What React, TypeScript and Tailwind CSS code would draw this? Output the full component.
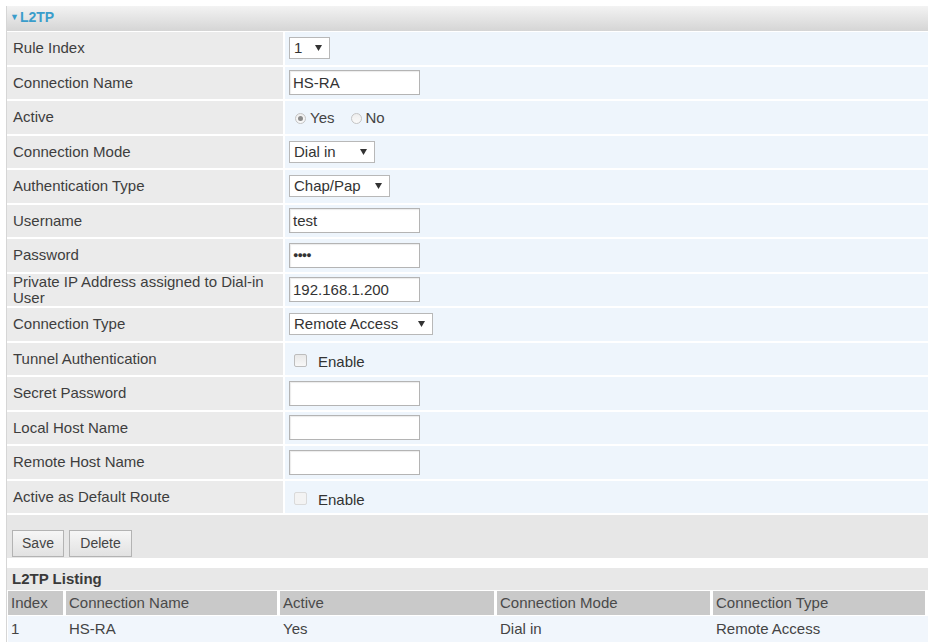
import React from "react";

type Row = { label: React.ReactNode; value: React.ReactNode };

const TextBox = ({ value, dots }: { value?: string; dots?: boolean }) => (
  <div className="w-[131px] h-[25px] bg-white border border-[#b4b4b4] shadow-[inset_1px_1px_1px_rgba(0,0,0,0.08)] flex items-center pl-[3px] text-[#333]">
    {dots ? <span className="text-[9px] tracking-[-1px] leading-none">●●●●</span> : value}
  </div>
);

const Select = ({ value, width }: { value: string; width: string }) => (
  <div
    className={`${width} h-[22px] bg-white border border-[#b8b8b8] flex items-center justify-between pl-[4px] pr-[7px] text-[#333]`}
  >
    <span>{value}</span>
    <svg width="7" height="6" viewBox="0 0 7 6">
      <path d="M0 0h7L3.5 6z" fill="#333" />
    </svg>
  </div>
);

const Radio = ({ checked }: { checked?: boolean }) => (
  <span className="inline-flex w-[11px] h-[11px] rounded-full border border-[#c4c4c4] bg-gradient-to-b from-[#eeeeee] to-[#fafafa] items-center justify-center">
    {checked && <span className="w-[5px] h-[5px] rounded-full bg-[#8a8a8a]" />}
  </span>
);

const Checkbox = ({ faded }: { faded?: boolean }) => (
  <span
    className={`inline-block w-[13px] h-[13px] rounded-[2px] border ${
      faded ? "border-[#dadada] bg-[#f3f3f3]" : "border-[#bdbdbd] bg-gradient-to-b from-[#e8e8e8] to-[#f8f8f8]"
    }`}
  />
);

export default function App() {
  const rows: Row[] = [
    { label: "Rule Index", value: <Select value="1" width="w-[41px]" /> },
    { label: "Connection Name", value: <TextBox value="HS-RA" /> },
    {
      label: "Active",
      value: (
        <div className="flex items-center pl-[6px] pt-[2px] text-[#444]">
          <Radio checked />
          <span className="ml-[4px]">Yes</span>
          <span className="ml-[17px] flex">
            <Radio />
          </span>
          <span className="ml-[3px]">No</span>
        </div>
      ),
    },
    { label: "Connection Mode", value: <Select value="Dial in" width="w-[86px]" /> },
    { label: "Authentication Type", value: <Select value="Chap/Pap" width="w-[101px]" /> },
    { label: "Username", value: <TextBox value="test" /> },
    { label: "Password", value: <TextBox dots /> },
    {
      label: (
        <span className="leading-[16px] block">
          Private IP Address assigned to Dial-in
          <br />
          User
        </span>
      ),
      value: <TextBox value="192.168.1.200" />,
    },
    { label: "Connection Type", value: <Select value="Remote Access" width="w-[144px]" /> },
    {
      label: "Tunnel Authentication",
      value: (
        <div className="flex items-center pl-[5px] pt-[3px] text-[#333]">
          <Checkbox />
          <span className="ml-[11px] pt-[3px]">Enable</span>
        </div>
      ),
    },
    { label: "Secret Password", value: <TextBox /> },
    { label: "Local Host Name", value: <TextBox /> },
    { label: "Remote Host Name", value: <TextBox /> },
    {
      label: "Active as Default Route",
      value: (
        <div className="flex items-center pl-[5px] pt-[3px] text-[#333]">
          <Checkbox faded />
          <span className="ml-[11px] pt-[3px]">Enable</span>
        </div>
      ),
    },
  ];

  const cols = ["Index", "Connection Name", "Active", "Connection Mode", "Connection Type"];
  const data = ["1", "HS-RA", "Yes", "Dial in", "Remote Access"];

  return (
    <div className="w-[931px] h-[642px] bg-white overflow-hidden font-['Liberation_Sans',Arial,sans-serif] text-[15px] text-[#3e3e3e]">
      <div className="ml-[6px] mr-[3px] mt-[6px] border-l border-[#d6d6d6] h-[636px]">
        {/* Section title */}
        <div className="h-[25px] bg-gradient-to-b from-[#f3f3f3] to-[#d5d5d5] flex items-center pl-[3px] pb-[2px] text-[#3a9dcb] font-bold text-[14px]">
          <span className="text-[9px] mr-[1px]">▼</span>L2TP
        </div>

        {/* Form rows */}
        <div className="border-t border-white">
          {rows.map((r, i) => (
            <div key={i} className="flex h-[34.5px] border-b-2 border-white">
              <div className="w-[278px] border-r-2 border-white bg-[#ebebeb] pl-[6px] flex items-center">
                {r.label}
              </div>
              <div className="flex-1 bg-[#eef5fc] pl-[4px] flex items-center">{r.value}</div>
            </div>
          ))}
        </div>

        {/* Buttons */}
        <div className="h-[43px] bg-[#e7e7e7] flex items-end gap-[5px] pl-[5px] pb-[1px]">
          <button className="w-[52px] h-[27px] border border-[#b3b3b3] bg-gradient-to-b from-[#f6f6f6] to-[#e2e2e2] text-[#444] text-[14px]">
            Save
          </button>
          <button className="w-[63px] h-[27px] border border-[#b3b3b3] bg-gradient-to-b from-[#f6f6f6] to-[#e2e2e2] text-[#444] text-[14px]">
            Delete
          </button>
        </div>

        {/* Listing */}
        <div className="mt-[10px] h-[22px] bg-[#e8e8e8] flex items-center pl-[5px] font-bold text-[#3a3a3a]">
          L2TP Listing
        </div>
        <div className="mt-[1px] ml-[1px] grid grid-cols-[55px_211px_214px_213px_212px] gap-x-[3px] h-[24px]">
          {cols.map((c) => (
            <div key={c} className="bg-[#c9c9c9] flex items-center pl-[3px] text-[#4a4a4a]">
              {c}
            </div>
          ))}
        </div>
        <div className="mt-[1px] ml-[1px] grid grid-cols-[55px_211px_214px_213px_212px] gap-x-[3px] h-[26px] bg-[#f1f6fc]">
          {data.map((d, i) => (
            <div key={i} className="flex items-center pl-[3px] text-[#444]">
              {d}
            </div>
          ))}
        </div>
      </div>
    </div>
  );
}
